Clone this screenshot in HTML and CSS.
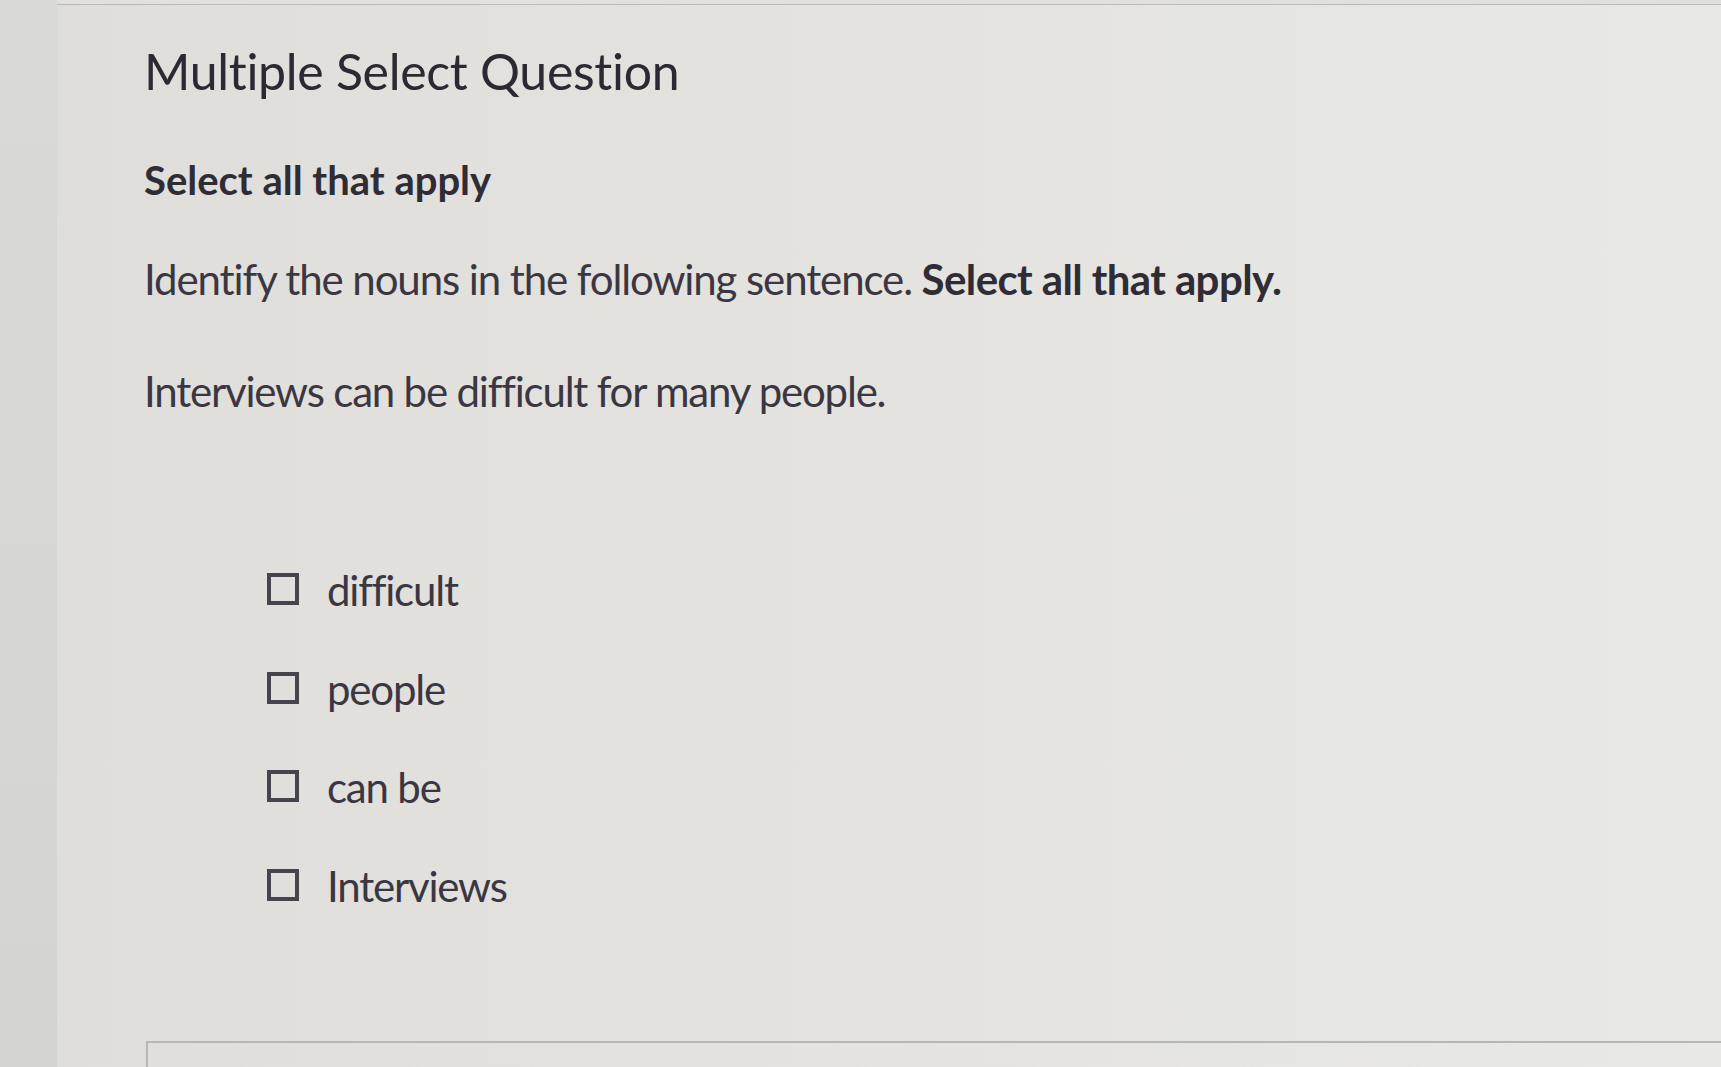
FILE: index.html
```html
<!DOCTYPE html>
<html lang="en">
<head>
<meta charset="utf-8">
<title>Multiple Select Question</title>
<link rel="stylesheet" href="styles.css">
</head>
<body>
<div class="page">
  <aside class="rail"></aside>
  <main class="content">
    <h1 class="title">Multiple Select Question</h1>
    <h2 class="sub">Select all that apply</h2>
    <p class="prompt">Identify the nouns in the following sentence. <strong>Select all that apply.</strong></p>
    <p class="sentence">Interviews can be difficult for many people.</p>
    <ul class="options">
      <li class="option"><span class="box"></span><span class="label">difficult</span></li>
      <li class="option"><span class="box"></span><span class="label">people</span></li>
      <li class="option"><span class="box"></span><span class="label">can be</span></li>
      <li class="option"><span class="box"></span><span class="label">Interviews</span></li>
    </ul>
    <div class="next"></div>
  </main>
</div>
</body>
</html>
```
FILE: styles.css
```css
html, body {
  margin: 0;
  padding: 0;
  height: 100%;
  overflow: hidden;
}
body {
  font-family: Lato, "Open Sans", sans-serif;
  color: #3b3742;
  background: #e1e0dc;
}
.page {
  display: flex;
  height: 1067px;
}
.rail {
  width: 57px;
  flex: none;
  background: linear-gradient(180deg, #d9dad7 0%, #d4d5d2 100%);
}
.content {
  flex: 1;
  margin-top: 4px;
  border-top: 1px solid #b9bab7;
  padding-left: 87px;
  padding-top: 36px;
  background: linear-gradient(90deg, #dfdeda 0%, #e3e2de 40%, #e8e8e6 100%);
}
.title {
  margin: 0;
  font-size: 50px;
  line-height: 60px;
  font-weight: 400;
  letter-spacing: -0.3px;
  color: #2c2932;
}
.sub {
  margin: 55px 0 0;
  font-size: 40px;
  line-height: 48px;
  font-weight: 700;
  color: #2f2c35;
}
.prompt {
  margin: 49px 0 0;
  font-size: 42px;
  line-height: 53px;
  letter-spacing: -1.1px;
}
.prompt strong {
  font-weight: 700;
  letter-spacing: -0.6px;
  color: #2f2c35;
}
.sentence {
  margin: 59px 0 0;
  font-size: 42px;
  line-height: 53px;
  letter-spacing: -1.2px;
}
.options {
  list-style: none;
  margin: 146px 0 0;
  padding: 0 0 0 123px;
  display: flex;
  flex-direction: column;
  gap: 45.7px;
}
.option {
  display: flex;
  align-items: flex-start;
  gap: 28px;
  font-size: 42px;
  line-height: 53px;
  letter-spacing: -1.2px;
}
.box {
  width: 32px;
  height: 32px;
  box-sizing: border-box;
  border: 4px solid #46454d;
  margin-top: 9px;
  flex: none;
}
.next {
  margin-top: 128px;
  margin-left: 2px;
  height: 60px;
  border-top: 2px solid #b6b7b4;
  border-left: 2px solid #b6b7b4;
}
```
